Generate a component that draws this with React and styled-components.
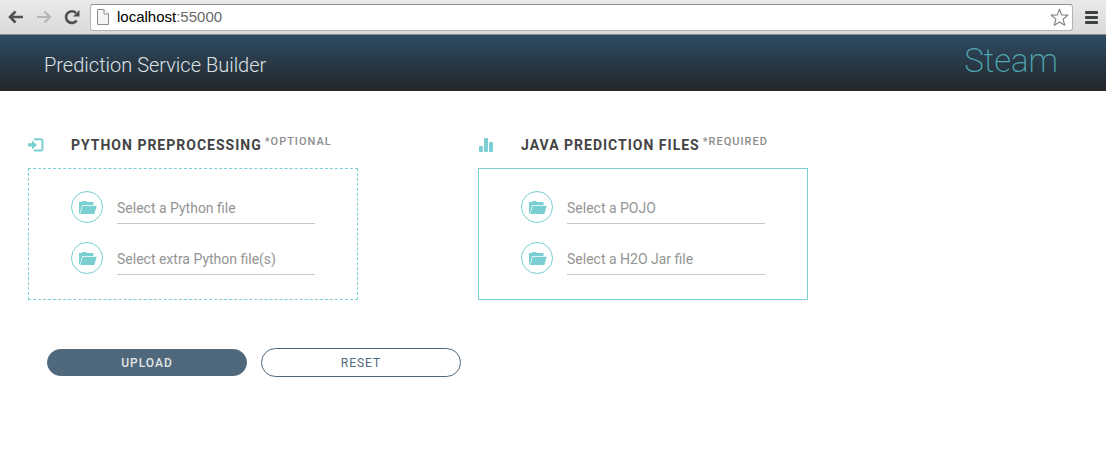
import React from "react";
import styled, { createGlobalStyle } from "styled-components";

const teal = "#7acfd2";
const slate = "#50687c";

const GlobalStyle = createGlobalStyle`
  * { box-sizing: border-box; }
  body { margin: 0; background: #fff; font-family: Roboto, "Liberation Sans", sans-serif; }
  button, input { font-family: inherit; margin: 0; }
  svg { display: block; flex: none; }
`;

const BrowserBar = styled.div`
  display: flex;
  align-items: center;
  height: 35px;
  padding: 0 7px;
  background: linear-gradient(#e9e9e9, #dadada);
  border-bottom: 1px solid #8c8c8c;
`;

const ToolButton = styled.button`
  display: flex;
  justify-content: center;
  width: ${(p) => p.$width}px;
  padding: 0;
  border: 0;
  background: none;
  flex: none;
`;

const AddressField = styled.div`
  display: flex;
  align-items: center;
  flex: 1;
  min-width: 0;
  height: 27px;
  margin: 0 10px 0 9px;
  padding: 0 3px 0 6px;
  background: #fff;
  border: 1px solid #b4b4b4;
  border-top-color: #8f8f8f;
  border-radius: 3px;
`;

const Address = styled.p`
  flex: 1;
  margin: 0 0 0 8px;
  font: 15px/20px "Liberation Sans", Arial, sans-serif;
  color: #000;
`;

const Port = styled.span`
  color: #6a6a6a;
`;

const Header = styled.header`
  display: flex;
  align-items: center;
  justify-content: space-between;
  height: 56px;
  padding: 0 48px 0 44px;
  background: linear-gradient(#2e4b63, #232629);
`;

const Title = styled.h1`
  margin: 4px 0 0;
  font-size: 20px;
  line-height: 28px;
  font-weight: 300;
  color: #dde2e6;
`;

const Brand = styled.a`
  margin-bottom: 4px;
  font-size: 33px;
  line-height: 44px;
  font-weight: 200;
  color: #4fa9b4;
  text-decoration: none;
`;

const Form = styled.form`
  padding: 44px 28px;
`;

const Panels = styled.div`
  display: grid;
  grid-template-columns: repeat(2, minmax(0, 330px));
  gap: 120px;
`;

const PanelHeading = styled.div`
  display: flex;
  align-items: center;
  height: 20px;
  margin-bottom: 13px;
`;

const HeadingIcon = styled.span`
  width: 43px;
  flex: none;
`;

const PanelTitle = styled.h2`
  margin: 0;
  font-size: 14px;
  line-height: 20px;
  font-weight: 700;
  letter-spacing: 1px;
  text-transform: uppercase;
  white-space: nowrap;
  color: #444;
`;

const Note = styled.span`
  align-self: flex-start;
  margin-left: 3px;
  font-size: 11px;
  line-height: 14px;
  font-weight: 500;
  letter-spacing: 1px;
  text-transform: uppercase;
  color: #8c8c8c;
`;

const FileBox = styled.div`
  display: grid;
  gap: 18px;
  padding: 22px 42px 24px;
  border: 1px ${(p) => (p.$optional ? "dashed" : "solid")} ${teal};
`;

const FileRow = styled.div`
  display: flex;
  gap: 14px;
  height: 33px;
`;

const FolderButton = styled.button`
  display: flex;
  align-items: center;
  justify-content: center;
  flex: none;
  width: 32px;
  height: 32px;
  padding: 2px 0 0 2px;
  border: 1px solid ${teal};
  border-radius: 50%;
  background: #fff;
`;

const FileInput = styled.input`
  flex: 1;
  min-width: 0;
  padding: 2px 0 0;
  border: 0;
  border-bottom: 1px solid #c8c8c8;
  background: none;
  font-size: 14px;
  outline: none;
  color: #444;
  &::placeholder { color: #949494; opacity: 1; }
`;

const Actions = styled.div`
  display: flex;
  align-items: center;
  gap: 14px;
  margin: 48px 0 0 19px;
`;

const PillButton = styled.button`
  width: 200px;
  height: ${(p) => (p.$filled ? 27 : 29)}px;
  padding: 0;
  border: 1px solid ${slate};
  border-radius: 15px;
  background: ${(p) => (p.$filled ? slate : "#fff")};
  color: ${(p) => (p.$filled ? "#e2e6e6" : slate)};
  font-size: 12px;
  font-weight: ${(p) => (p.$filled ? 500 : 400)};
  letter-spacing: 1px;
  text-transform: uppercase;
`;

const BackIcon = ({ color }) => (
  <svg width="16" height="14" viewBox="0 0 16 14" fill="none" stroke={color} strokeWidth="2.6">
    <path d="M15 7H3M7.500 1.500 2 7l5.500 5.500" />
  </svg>
);

const ForwardIcon = ({ color }) => (
  <svg width="16" height="14" viewBox="0 0 16 14" fill="none" stroke={color} strokeWidth="2.200">
    <path d="M1 7h12M8.500 1.500 14 7l-5.500 5.500" />
  </svg>
);

const ReloadIcon = () => (
  <svg width="16" height="16" viewBox="0 0 16 16">
    <path d="M12.600 11.500A5.800 5.800 0 1 1 12 4" fill="none" stroke="#505050" strokeWidth="2.600" />
    <path d="M15.500 1v6.500H9z" fill="#505050" />
  </svg>
);

const PageIcon = () => (
  <svg width="12" height="16" viewBox="0 0 12 16" fill="#f4f4f4" stroke="#8e8e8e">
    <path d="M.5.5H7l4.500 4.500v10.500H.5z" />
    <path d="M7 .5V5h4.500" fill="#fff" />
  </svg>
);

const StarIcon = () => (
  <svg width="19" height="19" viewBox="0 0 19 19" fill="#fff" stroke="#858585" strokeWidth="1.200" strokeLinejoin="round">
    <path d="M9.500 1.200 11.700 6.900 17.800 7.200 13.100 11.100 14.700 17.200 9.500 13.900 4.300 17.200 5.900 11.100 1.200 7.200 7.300 6.900z" />
  </svg>
);

const MenuIcon = () => (
  <svg width="13" height="13" viewBox="0 0 13 13" fill="#3f4242">
    <rect width="13" height="3" rx="1" />
    <rect y="5" width="13" height="3" rx="1" />
    <rect y="10" width="13" height="3" rx="1" />
  </svg>
);

const ImportIcon = () => (
  <svg width="16" height="14" viewBox="0 0 16 14">
    <path d="M6 1.200h6.500a2 2 0 0 1 2 2v7.300a2 2 0 0 1-2 2H6" fill="none" stroke={teal} strokeWidth="2" />
    <path d="M0 5.300h4V2.500L9 6.900l-5 4.400V8.500H0z" fill={teal} />
  </svg>
);

const BarsIcon = () => (
  <svg width="16" height="14" viewBox="0 0 16 14" fill={teal}>
    <rect x="1" y="8" width="4" height="6" rx="1" />
    <rect x="6" y="0" width="4" height="14" rx="1" />
    <rect x="11" y="4" width="4" height="10" rx="1" />
  </svg>
);

const FolderIcon = () => (
  <svg width="18" height="14" viewBox="0 0 18 14" fill={teal}>
    <path d="M0 12.500V1h3L3.800 0h3.400L8 1h6.500v3H3.200L.8 12.500z" />
    <path d="M3.700 4.800H17.800L15.300 13H1.200z" />
  </svg>
);

function FileField({ label }) {
  return (
    <FileRow>
      <FolderButton type="button" aria-label={`Browse: ${label}`}>
        <FolderIcon />
      </FolderButton>
      <FileInput type="text" aria-label={label} placeholder={label} />
    </FileRow>
  );
}

function Panel({ icon, title, note, optional, files }) {
  return (
    <section>
      <PanelHeading>
        <HeadingIcon>{icon}</HeadingIcon>
        <PanelTitle>{title}</PanelTitle>
        <Note>{note}</Note>
      </PanelHeading>
      <FileBox $optional={optional}>
        {files.map((label) => (
          <FileField key={label} label={label} />
        ))}
      </FileBox>
    </section>
  );
}

export default function App() {
  return (
    <>
      <GlobalStyle />
      <BrowserBar>
        <ToolButton $width={18} aria-label="Back"><BackIcon color="#505050" /></ToolButton>
        <ToolButton $width={38} aria-label="Forward"><ForwardIcon color="#b5b5b5" /></ToolButton>
        <ToolButton $width={18} aria-label="Reload"><ReloadIcon /></ToolButton>
        <AddressField>
          <PageIcon />
          <Address>localhost<Port>:55000</Port></Address>
          <ToolButton $width={19} aria-label="Bookmark this page"><StarIcon /></ToolButton>
        </AddressField>
        <ToolButton $width={16} aria-label="Menu"><MenuIcon /></ToolButton>
      </BrowserBar>
      <Header>
        <Title>Prediction Service Builder</Title>
        <Brand href="#">Steam</Brand>
      </Header>
      <main>
        <Form>
          <Panels>
            <Panel
              icon={<ImportIcon />}
              title="Python preprocessing"
              note="*Optional"
              optional
              files={["Select a Python file", "Select extra Python file(s)"]}
            />
            <Panel
              icon={<BarsIcon />}
              title="Java prediction files"
              note="*Required"
              files={["Select a POJO", "Select a H2O Jar file"]}
            />
          </Panels>
          <Actions>
            <PillButton type="button" $filled>Upload</PillButton>
            <PillButton type="reset">Reset</PillButton>
          </Actions>
        </Form>
      </main>
    </>
  );
}
